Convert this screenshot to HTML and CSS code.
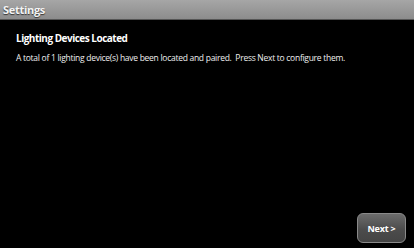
FILE: index.html
```html
<!DOCTYPE html>
<html lang="en">
<head>
    <meta charset="UTF-8">
    <meta name="viewport" content="width=device-width, initial-scale=1.0">
    <title>Settings</title>
    <link rel="stylesheet" href="styles.css">
</head>
<body>
    <div class="title-bar">Settings</div>

    <div class="content">
        <div class="heading">Lighting Devices Located</div>
        <p class="message">A total of 1 lighting device(s) have been located and paired.&nbsp; Press Next to configure them.</p>
    </div>

    <div class="footer">
        <button type="button" class="next-btn">Next &gt;</button>
    </div>
</body>
</html>
```

FILE: styles.css
```css
html, body {
    height: 100%;
}

body {
    font-family: 'Open Sans', 'Noto Sans', sans-serif;
    background-color: #000;
    color: #fff;
    margin: 0;
    display: flex;
    flex-direction: column;
}

.title-bar {
    height: 19px;
    line-height: 19px;
    padding-left: 3px;
    font-size: 11px;
    font-weight: bold;
    letter-spacing: -0.3px;
    color: #f4f4f4;
    text-shadow: 0 1px 1px #333;
    background: linear-gradient(to bottom, #a6a6a6, #8c8c8c);
    border-bottom: 1px solid #555;
}

.content {
    flex: 1;
    padding: 11px 16px 0;
}

.heading {
    font-size: 10px;
    font-weight: bold;
    letter-spacing: -0.5px;
    line-height: 14px;
}

.message {
    margin: 7px 0 0;
    font-size: 8.5px;
    letter-spacing: -0.28px;
    line-height: 12px;
    color: #eee;
}

.footer {
    display: flex;
    justify-content: flex-end;
    padding: 0 8px 5px 0;
}

.next-btn {
    width: 49px;
    height: 30px;
    border: 1px solid #8a8a8a;
    border-radius: 6px;
    background: linear-gradient(to bottom, #6c6c6c, #4c4c4c 55%, #444);
    color: #fff;
    font-family: inherit;
    font-size: 9px;
    font-weight: bold;
    letter-spacing: -0.2px;
    padding: 0;
    cursor: pointer;
}
```
